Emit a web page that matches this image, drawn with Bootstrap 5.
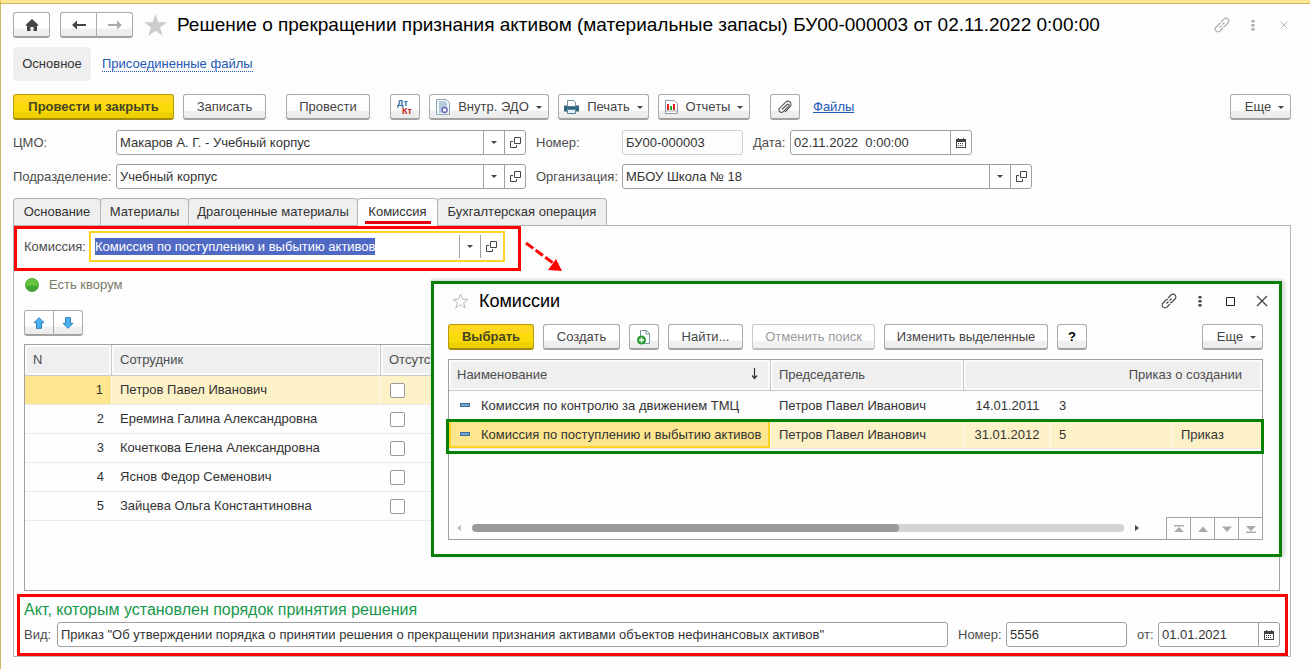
<!DOCTYPE html>
<html lang="ru">
<head>
<meta charset="utf-8">
<meta name="viewport" content="width=device-width, initial-scale=1">
<title>Решение о прекращении признания активом</title>
<link href="https://cdn.jsdelivr.net/npm/bootstrap@5.3.0/dist/css/bootstrap.min.css" rel="stylesheet">
<style>
body{font-family:"Liberation Sans",Arial,sans-serif;font-size:13px;line-height:16px;color:#333;background:#fdfdfd;}
.app{min-height:100vh;border-left:1px solid #d0b95f;border-top:1px solid #fbe58f;}
.topstrip{height:3px;background:#fee890;border-bottom:1px solid #cbb762;}
.page-in{padding:8px 19px 12px 12px;}
h1{font-size:19px;line-height:24px;color:#000;font-weight:400;margin:0 0 0 10px;white-space:nowrap;}
.btn{--bs-btn-font-size:13px;--bs-btn-padding-y:0;--bs-btn-padding-x:0;--bs-btn-border-radius:3px;--bs-btn-color:#444;--bs-btn-border-color:#ababab;--bs-btn-disabled-color:#999;--bs-btn-disabled-opacity:1;--bs-btn-disabled-border-color:#c8c8c8;
 height:26px;line-height:22px;white-space:nowrap;display:inline-flex;align-items:center;justify-content:center;flex:none;
 background:linear-gradient(#fff 0 66%,#efefef 70%,#ececec);border-bottom:2px solid #a2a2a2;}
.btn:disabled{background:linear-gradient(#fff 0 66%,#f2f2f2 70%,#f0f0f0);border-bottom-color:#bdbdbd;}
.btn-main{--bs-btn-font-weight:700;--bs-btn-color:#4a4421;--bs-btn-border-color:#b59a12;background:linear-gradient(#ffd71f 0 33%,#f8db08 36% 72%,#efd000 78%,#edcf00);border-bottom-color:#a08a10;}
.w30{width:30px}.w37{width:37px}.w61{width:61px}.w75{width:75px}.w77{width:77px}.w83{width:83px}.w84{width:84px}.w86{width:86px}.w91{width:91px}.w92{width:92px}.w120{width:120px}.w123{width:123px}.w161{width:161px}.w164{width:164px}
.g9{gap:9px}.g10{gap:10px}
.grp{margin-left:11px}
.mt9{margin-top:9px}.mt10{margin-top:10px}.mt12{margin-top:12px}.mt13{margin-top:13px}
.caret{width:0;height:0;border:3px solid transparent;border-top:3px solid #444;border-bottom:0;flex:none;}
.btn .caret{margin-left:7px;margin-top:2px;}
.plainbtn{border:0;background:none;padding:0;display:flex;align-items:center;justify-content:center;}
.winctl .plainbtn{width:31px;height:22px;color:inherit;}
.pagectl{margin-right:-8px;color:#aaa;}
.popctl{margin-right:-14px;color:#444;}
.crumb{height:34px;width:78px;background:#efefef;border-radius:4px;}
a{color:#2358b8;}
.dotted{text-decoration:none;border-bottom:1px dotted #2358b8;line-height:14px;margin-left:1px;}
.fieldbox{height:25px;display:flex;border:1px solid #a0a0a0;border-radius:3px;background:#fff;}
.fieldbox input{border:0;outline:0;padding:0 3px;flex:1;min-width:0;width:0;background:transparent;color:#333;}
.fieldbox.ro{border-color:#d0d0d0;background:#fdfdfd;}
.fieldbox .plainbtn{width:21px;border-left:1px solid #a0a0a0;flex:none;}
.caplabel{color:#4d4d4d;white-space:nowrap;flex:none;}
.l103{width:103px}.l86{width:86px}.l65{width:65px}.l48{width:48px}.l37{width:37px}.l33{width:33px}.l21{width:21px}
.f410{width:410px}.f121{width:121px}.f182{width:182px}.f122{width:122px}
.formtabs .nav-link{font-size:13px;line-height:26px;height:27px;color:#333;background:#efefef;border:1px solid #b4b4b4;border-bottom:0;border-radius:4px 4px 0 0;margin-left:-1px;text-align:center;padding:0;}
.formtabs .nav-item:first-child .nav-link{margin-left:0;}
.formtabs .nav-link.active{background:#fdfdfd;color:#333;height:28px;margin-bottom:-1px;position:relative;z-index:1;}
.formtabs .nav-link.active span{display:block;width:66px;margin:0 auto;height:25px;border-bottom:3px solid #e6000f;line-height:26px;}
.t88{width:88px}.t89{width:89px}.t170{width:170px}.t81{width:81px}
.sheet{border:1px solid #b4b4b4;position:relative;}
.redbox{border:3px solid #f00;}
.redpick{width:507px;height:45px;padding:2px 13px 6px 7px;}
.yellowbox{width:416px;height:31px;border:2px solid #ffd223;background:#fff;display:flex;padding:2px 2px 2px 4px;}
.yellowbox input{width:280px;border:0;outline:0;padding:0;background:#5069c4;color:#fff;height:17px;align-self:center;}
.yellowbox .plainbtn{width:21px;border-left:1px solid #a0a0a0;}
.inset{padding:0 10px;}
.quorum{height:26px;color:#7a7a66;margin-left:1px;}
.ball{width:14px;height:14px;border-radius:50%;background:linear-gradient(#66c23c 55%,#3fa52e 60%);border:1px solid #48a53a;}
.grid{border:1px solid #a0a0a0;background:#fdfdfd;overflow:hidden;}
.grid table{table-layout:fixed;width:100%;margin:0;border-collapse:separate;border-spacing:0;}
.grid th{font-weight:400;color:#4d4d4d;height:31px;padding:0 8px;background:#efefef;border-bottom:1px solid #c9c9c9;border-right:1px solid #c9c9c9;box-shadow:inset 0 0 0 2px #fafafa;white-space:nowrap;overflow:hidden;}
.grid td{height:29px;padding:2px 8px 0;white-space:nowrap;border-bottom:1px solid #e9e9e9;}
.grid tr.cur td{background:#fdf1c8;border-right:1px solid #fffaf0;}
.grid tr.cur td:first-child{background:#fde68e;}
.maing{height:247px;}
.maing td{padding-top:0;}
.maing td:last-child{padding:0 9px;}
.form-check-input{width:15px;height:15px;border:1px solid #999;margin:0;vertical-align:middle;}
.form-check-input[type=checkbox]{border-radius:2px;}
.pop{position:absolute;left:417px;right:8px;top:55px;height:276px;border:3px solid #068006;background:#fdfdfd;padding:6px 16px 13px 14px;box-shadow:0 -2px 2px #ddd,3px 0 3px #ddd;}
.pop h2{font-size:18px;line-height:22px;color:#000;margin:0 0 0 10px;font-weight:400;}
.grid.popg{height:181px;position:relative;overflow:visible;}
.popg tr:first-child td{border-bottom-color:#fdfdfd;}
.popg tr.cur td:first-child{box-shadow:inset 0 0 0 2px #ffd223;}
.popg th:last-child{padding-right:20px;border-right:0;}
.rowmark{position:absolute;left:-3px;right:-2px;top:59px;height:35px;border:3px solid #068006;}
.dash{display:inline-block;width:10px;height:4px;background:#6fa8cf;border:1px solid #3f6e9a;vertical-align:3px;margin:0 11px 0 3px;}
.track{height:8px;border-radius:4px;background:#d4d4d4;flex:1;overflow:hidden;margin:0 11px;}
.thumb{height:8px;border-radius:4px;background:#999;}
.tri-l{border:3px solid transparent;border-right:4px solid #bbb;border-left:0;margin-left:8px;}
.tri-r{border:3px solid transparent;border-left:4px solid #444;border-right:0;margin-right:27px;}
.pager .plainbtn{width:24px;height:22px;border-left:1px solid #a0a0a0;border-top:1px solid #a0a0a0;}
.footrow{position:absolute;left:0;right:0;bottom:0;}
.redact{margin:3px 2px 0 3px;padding:3px 5px 6px 4px;height:62px;}
.redact h3{font-size:16px;line-height:20px;color:#16994d;margin:0 0 2px;font-weight:400;}
svg{flex:none;display:block;}
</style>
</head>
<body>
<svg width="0" height="0" class="position-absolute" aria-hidden="true">
<symbol id="open" viewBox="0 0 11 11"><path d="M4.500.500h6v6h-6zM3 4.500H.5v6h6V8" fill="none" stroke="#444"/></symbol>
<symbol id="cal" viewBox="0 0 10 10"><path d="M0 1h2V0h1v1h4V0h1v1h2v9H0z" fill="#444"/><path d="M1 4h8v5H1z" fill="#fff"/><path d="M2 5h1v1H2zM4 5h1v1H4zM6 5h1v1H6zM2 7h1v1H2zM4 7h1v1H4zM6 7h1v1H6z" fill="#444"/></symbol>
<symbol id="chain" viewBox="0 0 16 16"><path d="M7 5l3-3a2.700 2.700 0 0 1 4 0 2.700 2.700 0 0 1 0 4l-3 3a2.700 2.700 0 0 1-2 .8M9 11l-3 3a2.700 2.700 0 0 1-4 0 2.700 2.700 0 0 1 0-4l3-3a2.700 2.700 0 0 1 2-.8M5.500 10.500l2-2M8.500 7.500l2-2" fill="none" stroke="currentColor" stroke-width="1.100"/></symbol>
<symbol id="dots" viewBox="0 0 4 12"><path d="M.5 1h3v2.500h-3zM.5 5h3v2.500h-3zM.5 9h3v2.500h-3z" fill="currentColor"/></symbol>
<symbol id="cross" viewBox="0 0 12 12"><path d="M1 1l10 10M11 1L1 11" stroke="currentColor" stroke-width="1.300"/></symbol>
</svg>
<div class="app">
<div class="topstrip"></div>
<main class="page-in">
  <header class="d-flex align-items-center">
    <button class="btn w37" aria-label="Домой"><svg width="16" height="14" viewBox="0 0 16 14"><path d="M8 1l7 6.500h-2V13H9.500V9h-3v4H3V7.500H1z" fill="#444"/></svg></button>
    <div class="btn-group" style="margin:0 11px 0 10px">
      <button class="btn w37" aria-label="Назад"><svg width="14" height="10" viewBox="0 0 14 10"><path d="M0 5l5-4.500V4h9v2H5v3.500z" fill="#444"/></svg></button>
      <button class="btn w37" aria-label="Вперед"><svg width="14" height="10" viewBox="0 0 14 10"><path d="M14 5L9 .5V4H0v2h9v3.500z" fill="#aaa"/></svg></button>
    </div>
    <svg width="23" height="22" viewBox="0 0 23 22"><path d="M11.500 0l2.800 8.200H23l-7 5.200 2.700 8.600-7.200-5.200L4.300 22 7 13.400 0 8.200h8.700z" fill="#ccc"/></svg>
    <h1>Решение о прекращении признания активом (материальные запасы) БУ00-000003 от 02.11.2022 0:00:00</h1>
    <div class="winctl pagectl ms-auto d-flex align-items-center">
      <button class="plainbtn" aria-label="Ссылка"><svg width="16" height="16"><use href="#chain"/></svg></button>
      <button class="plainbtn" aria-label="Меню"><svg width="4" height="12"><use href="#dots"/></svg></button>
      <button class="plainbtn" aria-label="Закрыть"><svg width="8" height="8"><use href="#cross"/></svg></button>
    </div>
  </header>
  <nav class="d-flex align-items-center g10 mt9">
    <div class="crumb d-flex align-items-center justify-content-center">Основное</div>
    <a href="#" class="dotted">Присоединенные файлы</a>
  </nav>
  <div class="d-flex align-items-center g9 mt13">
    <button class="btn btn-main w161">Провести и закрыть</button>
    <button class="btn w83">Записать</button>
    <button class="btn w84 grp">Провести</button>
    <button class="btn w30 grp" aria-label="Дт Кт"><svg width="16" height="18" viewBox="0 0 16 18" font-family="Liberation Sans" font-size="9" font-weight="700"><text x="0" y="8" fill="#2f6c9c">Дт</text><text x="5" y="16" fill="#c61a10">Кт</text></svg></button>
    <button class="btn w120"><svg class="me-2" width="14" height="16" viewBox="0 0 14 16"><path d="M.5.500h10l3 3v12H.5z" fill="#eef4f7" stroke="#8ba6b5"/><path d="M3 3h7M3 5h8M3 7h8M3 9h3M3 11h2M3 13h2" stroke="#7fa3c0"/><circle cx="8.500" cy="11" r="2.500" fill="#fff" stroke="#6565bb" stroke-width="1.500"/></svg>Внутр. ЭДО<span class="caret"></span></button>
    <button class="btn w91"><svg class="me-2" width="15" height="14" viewBox="0 0 15 14"><path d="M3.500.500h6l2 2v4h-8z" fill="#fff" stroke="#6f8fa3"/><path d="M0 5.500h3v1h9v-1h3v6h-3V9H3v2.500H0z" fill="#34657f"/><path d="M3.500 9.500h8v4h-8z" fill="#e4f1f8" stroke="#56839b"/></svg>Печать<span class="caret"></span></button>
    <button class="btn w92"><svg class="me-2" width="13" height="14" viewBox="0 0 13 14"><path d="M.5.500h9l3 3v10H.5z" fill="#fff" stroke="#8b9ca8"/><path d="M2 4h2v6H2z" fill="#d22"/><path d="M5 6h2v4H5z" fill="#2a2"/><path d="M8 4h2v6H8z" fill="#d22"/><path d="M1 11h11" stroke="#aaa"/></svg>Отчеты<span class="caret"></span></button>
    <button class="btn w30 grp" aria-label="Вложения"><svg width="14" height="14" viewBox="0 0 14 14"><path d="M4 9.500l5-5a1.200 1.200 0 0 1 1.700 1.700l-5.500 5.500a2.400 2.400 0 0 1-3.500-3.500l6-6a3 3 0 0 1 4.400 4.400L7 12" fill="none" stroke="#555" stroke-width="1.100"/></svg></button>
    <a href="#" class="ms-1">Файлы</a>
    <button class="btn w61 ms-auto ps-2">Еще<span class="caret"></span></button>
  </div>
  <div class="d-flex align-items-center g10 mt10">
    <div class="d-flex align-items-center"><label class="caplabel l103" for="cmo">ЦМО:</label>
      <div class="fieldbox f410"><input id="cmo" value="Макаров А. Г. - Учебный корпус"><button class="plainbtn" aria-label="Список"><span class="caret"></span></button><button class="plainbtn" aria-label="Открыть"><svg width="11" height="11"><use href="#open"/></svg></button></div></div>
    <div class="d-flex align-items-center"><label class="caplabel l86" for="num">Номер:</label><div class="fieldbox ro f121"><input id="num" value="БУ00-000003"></div></div>
    <div class="d-flex align-items-center"><label class="caplabel l37" for="dt">Дата:</label><div class="fieldbox f182"><input id="dt" value="02.11.2022  0:00:00"><button class="plainbtn" aria-label="Календарь"><svg width="10" height="10"><use href="#cal"/></svg></button></div></div>
  </div>
  <div class="d-flex align-items-center g10 mt9">
    <div class="d-flex align-items-center"><label class="caplabel l103" for="dep">Подразделение:</label>
      <div class="fieldbox f410"><input id="dep" value="Учебный корпус"><button class="plainbtn" aria-label="Список"><span class="caret"></span></button><button class="plainbtn" aria-label="Открыть"><svg width="11" height="11"><use href="#open"/></svg></button></div></div>
    <div class="d-flex align-items-center"><label class="caplabel l86" for="org">Организация:</label>
      <div class="fieldbox f410"><input id="org" value="МБОУ Школа № 18"><button class="plainbtn" aria-label="Список"><span class="caret"></span></button><button class="plainbtn" aria-label="Открыть"><svg width="11" height="11"><use href="#open"/></svg></button></div></div>
  </div>
  <ul class="nav formtabs mb-0 mt9">
    <li class="nav-item"><a class="nav-link t88" href="#">Основание</a></li>
    <li class="nav-item"><a class="nav-link t89" href="#">Материалы</a></li>
    <li class="nav-item"><a class="nav-link t170" href="#">Драгоценные материалы</a></li>
    <li class="nav-item"><a class="nav-link t81 active" href="#"><span>Комиссия</span></a></li>
    <li class="nav-item"><a class="nav-link t170" href="#">Бухгалтерская операция</a></li>
  </ul>
  <section class="sheet">
    <div class="d-flex">
      <div class="redbox redpick d-flex">
        <label class="caplabel align-self-center l65" for="com">Комиссия:</label>
        <div class="yellowbox"><input id="com" value="Комиссия по поступлению и выбытию активов"><button class="plainbtn ms-auto" aria-label="Список"><span class="caret"></span></button><button class="plainbtn" aria-label="Открыть"><svg width="11" height="11"><use href="#open"/></svg></button></div>
      </div>
      <svg class="ms-1 mt-3" width="38" height="30" viewBox="0 0 38 30"><path d="M1 1l27 20" stroke="#f00" stroke-width="3" stroke-dasharray="9 3"/><path d="M37 29l-14-1 8-11z" fill="#f00"/></svg>
    </div>
    <div class="inset">
      <div class="quorum d-flex align-items-center g10"><span class="ball"></span>Есть кворум</div>
      <div class="btn-group mb-2 mt12">
        <button class="btn w30" aria-label="Вверх"><svg width="12" height="12" viewBox="0 0 12 12"><path d="M6 .7l5 5H8.500v5.600h-5V5.700H1z" fill="#48b3f0" stroke="#2b7fb5"/></svg></button>
        <button class="btn w30" aria-label="Вниз"><svg width="12" height="12" viewBox="0 0 12 12"><path d="M6 11.300l5-5H8.500V.7h-5v5.600H1z" fill="#48b3f0" stroke="#2b7fb5"/></svg></button>
      </div>
      <div class="grid maing">
        <table>
          <colgroup><col style="width:87px"><col style="width:269px"><col></colgroup>
          <thead><tr><th>N</th><th>Сотрудник</th><th>Отсутствует</th></tr></thead>
          <tbody>
          <tr class="cur"><td class="text-end">1</td><td>Петров Павел Иванович</td><td><input class="form-check-input" type="checkbox" aria-label="Петров отсутствует"></td></tr>
          <tr><td class="text-end">2</td><td>Еремина Галина Александровна</td><td><input class="form-check-input" type="checkbox" aria-label="Еремина отсутствует"></td></tr>
          <tr><td class="text-end">3</td><td>Кочеткова Елена Александровна</td><td><input class="form-check-input" type="checkbox" aria-label="Кочеткова отсутствует"></td></tr>
          <tr><td class="text-end">4</td><td>Яснов Федор Семенович</td><td><input class="form-check-input" type="checkbox" aria-label="Яснов отсутствует"></td></tr>
          <tr><td class="text-end">5</td><td>Зайцева Ольга Константиновна</td><td><input class="form-check-input" type="checkbox" aria-label="Зайцева отсутствует"></td></tr>
          </tbody>
        </table>
      </div>
    </div>
    <div class="redbox redact">
      <h3>Акт, которым установлен порядок принятия решения</h3>
      <div class="d-flex align-items-center g10">
        <div class="d-flex align-items-center flex-fill"><label class="caplabel l33" for="kind">Вид:</label><div class="fieldbox flex-fill"><input id="kind" value="Приказ &quot;Об утверждении порядка о принятии решения о прекращении признания активами объектов нефинансовых активов&quot;"></div></div>
        <div class="d-flex align-items-center"><label class="caplabel l48" for="n2">Номер:</label><div class="fieldbox f121"><input id="n2" value="5556"></div></div>
        <div class="d-flex align-items-center"><label class="caplabel l21" for="d2">от:</label><div class="fieldbox f122"><input id="d2" value="01.01.2021"><button class="plainbtn" aria-label="Календарь"><svg width="10" height="10"><use href="#cal"/></svg></button></div></div>
      </div>
    </div>
    <div class="pop">
      <div class="d-flex align-items-center">
        <svg class="ms-1" width="17" height="16" viewBox="0 0 17 16"><path d="M8.500 1l2 5.300h5.500l-4.400 3.400 1.700 5.300-4.800-3.300L3.700 15l1.700-5.300L1 6.300h5.500z" fill="none" stroke="#bbb"/></svg>
        <h2>Комиссии</h2>
        <div class="winctl popctl ms-auto d-flex align-items-center">
          <button class="plainbtn" aria-label="Ссылка"><svg width="16" height="16"><use href="#chain"/></svg></button>
          <button class="plainbtn" aria-label="Меню"><svg width="4" height="12"><use href="#dots"/></svg></button>
          <button class="plainbtn" aria-label="Развернуть"><svg width="9" height="9" viewBox="0 0 9 9"><path d="M.5.500h8v8h-8z" fill="none" stroke="#222"/></svg></button>
          <button class="plainbtn" aria-label="Закрыть"><svg width="12" height="12"><use href="#cross"/></svg></button>
        </div>
      </div>
      <div class="d-flex g9 mt12">
        <button class="btn btn-main w86">Выбрать</button>
        <button class="btn w77">Создать</button>
        <button class="btn w30" aria-label="Скопировать"><svg width="16" height="16" viewBox="0 0 16 16"><path d="M4.500 1.500h6l3 3v10h-9z" fill="#fff" stroke="#7a95a6"/><path d="M10 1.500V5h3.500" fill="none" stroke="#7a95a6"/><circle cx="5.500" cy="11" r="4.500" fill="#2b9c33"/><path d="M5.500 8.500v5M3 11h5" stroke="#fff" stroke-width="1.500"/></svg></button>
        <button class="btn w75">Найти...</button>
        <button class="btn w123" disabled>Отменить поиск</button>
        <button class="btn w164">Изменить выделенные</button>
        <button class="btn w30 fw-bold text-black">?</button>
        <button class="btn w61 ms-auto ps-2">Еще<span class="caret"></span></button>
      </div>
      <div class="grid popg mt9">
        <table>
          <colgroup><col style="width:322px"><col style="width:193px"><col style="width:87px"><col style="width:122px"><col></colgroup>
          <thead><tr><th><span class="d-flex justify-content-between">Наименование<svg class="me-1" width="7" height="13" viewBox="0 0 7 13"><path d="M3.500 1v10M1 8.500L3.500 11.500 6 8.500" fill="none" stroke="#333" stroke-width="1.200"/></svg></span></th><th>Председатель</th><th colspan="3" class="text-end">Приказ о создании</th></tr></thead>
          <tbody>
          <tr><td><span class="dash"></span>Комиссия по контролю за движением ТМЦ</td><td>Петров Павел Иванович</td><td class="text-center">14.01.2011</td><td>3</td><td></td></tr>
          <tr class="cur"><td><span class="dash"></span>Комиссия по поступлению и выбытию активов</td><td>Петров Павел Иванович</td><td class="text-center">31.01.2012</td><td>5</td><td>Приказ</td></tr>
          </tbody>
        </table>
        <div class="rowmark"></div>
        <div class="footrow d-flex align-items-center">
          <span class="tri-l"></span>
          <div class="track"><div class="thumb" style="width:65.5%"></div></div>
          <span class="tri-r"></span>
          <div class="pager d-flex">
            <button class="plainbtn" aria-label="В начало"><svg width="10" height="8" viewBox="0 0 10 8"><path d="M0 0h10v1.500H0zM5 2l5 5H0z" fill="#aaa"/></svg></button>
            <button class="plainbtn" aria-label="Выше"><svg width="10" height="8" viewBox="0 0 10 8"><path d="M5 1.500L10 7H0z" fill="#aaa"/></svg></button>
            <button class="plainbtn" aria-label="Ниже"><svg width="10" height="8" viewBox="0 0 10 8"><path d="M5 7l5-5.500H0z" fill="#aaa"/></svg></button>
            <button class="plainbtn" aria-label="В конец"><svg width="10" height="8" viewBox="0 0 10 8"><path d="M0 6.500h10V8H0zM5 6l5-5H0z" fill="#aaa"/></svg></button>
          </div>
        </div>
      </div>
    </div>
  </section>
</main>
</div>
<script src="https://cdn.jsdelivr.net/npm/bootstrap@5.3.0/dist/js/bootstrap.bundle.min.js"></script>
</body>
</html>
